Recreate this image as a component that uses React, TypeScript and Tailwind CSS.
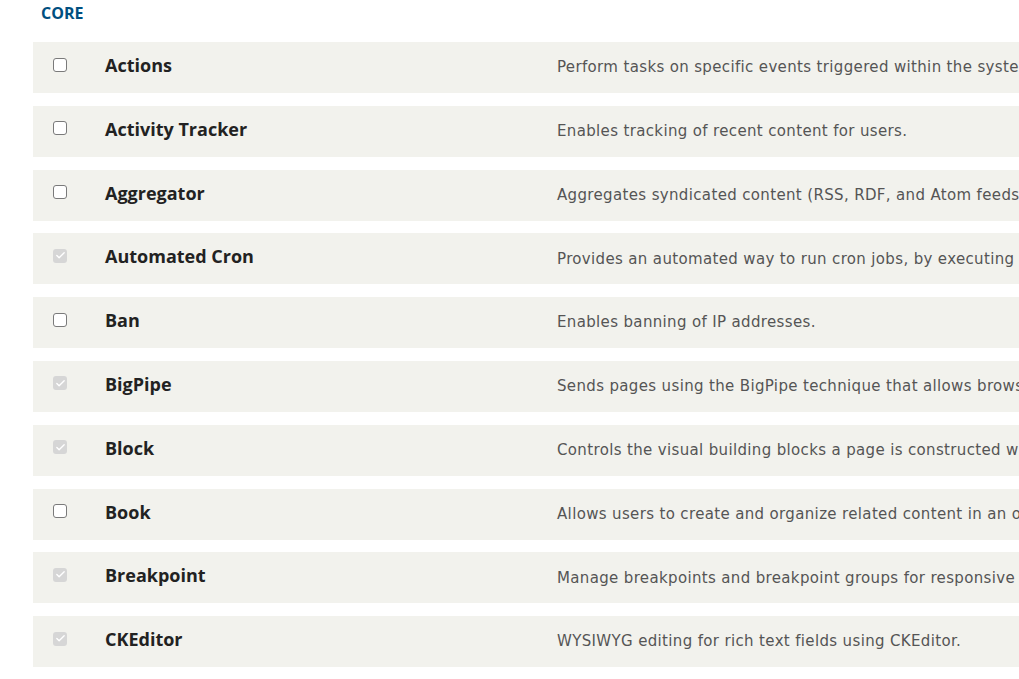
import { Check } from 'lucide-react'

type Mod = { name: string; desc: string; locked?: boolean }

const MODULES: Mod[] = [
  { name: 'Actions', desc: 'Perform tasks on specific events triggered within the system.' },
  { name: 'Activity Tracker', desc: 'Enables tracking of recent content for users.' },
  { name: 'Aggregator', desc: 'Aggregates syndicated content (RSS, RDF, and Atom feeds) from external sources.' },
  { name: 'Automated Cron', desc: 'Provides an automated way to run cron jobs, by executing them at the end of a server response.', locked: true },
  { name: 'Ban', desc: 'Enables banning of IP addresses.' },
  { name: 'BigPipe', desc: 'Sends pages using the BigPipe technique that allows browsers to show them much faster.', locked: true },
  { name: 'Block', desc: 'Controls the visual building blocks a page is constructed with.', locked: true },
  { name: 'Book', desc: 'Allows users to create and organize related content in an outline.' },
  { name: 'Breakpoint', desc: 'Manage breakpoints and breakpoint groups for responsive designs.', locked: true },
  { name: 'CKEditor', desc: 'WYSIWYG editing for rich text fields using CKEditor.', locked: true },
]

function Box({ locked }: { locked?: boolean }) {
  if (locked)
    return (
      <span className="flex size-[14px] items-center justify-center rounded-[3px] bg-[#d6d6d6]">
        <Check className="size-[11px] text-white" strokeWidth={3} />
      </span>
    )
  return <span className="block size-[14px] rounded-[3px] border border-[#7a7a7a] bg-white" />
}

export default function App() {
  return (
    <div className="min-h-screen overflow-hidden bg-white pl-[33px]">
      <div className="pl-[8px] pt-[1px] h-[42px] text-[16px] font-bold text-[#004f80] [font-family:'Open_Sans',sans-serif]">
        CORE
      </div>
      <div className="flex w-[1200px] flex-col gap-[12.8px]">
        {MODULES.map((m) => (
          <div key={m.name} className="flex h-[51px] items-center bg-[#f2f2ed]">
            <div className="w-[72px] shrink-0 pl-[20px] pb-[6px]">
              <Box locked={m.locked} />
            </div>
            <div className="w-[452px] shrink-0 pb-[4px] text-[18px] font-bold text-[#222] [font-family:'Open_Sans',sans-serif]">
              {m.name}
            </div>
            <div className="whitespace-nowrap text-[15px] tracking-[0.35px] text-[#555] [font-family:'DejaVu_Sans',sans-serif]">
              {m.desc}
            </div>
          </div>
        ))}
      </div>
    </div>
  )
}
